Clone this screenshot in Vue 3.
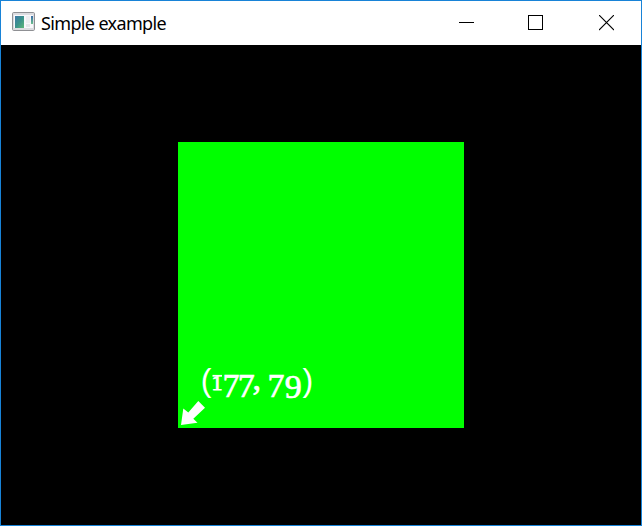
<script setup>
const title = 'Simple example'
</script>

<template>
  <div class="window">
    <header class="titlebar">
      <svg class="app-icon" width="24" height="20" viewBox="0 0 24 20">
        <defs>
          <linearGradient id="pane" x1="0" y1="0" x2="1" y2="1">
            <stop offset="0" stop-color="#3e78a8" />
            <stop offset="0.5" stop-color="#3b928c" />
            <stop offset="1" stop-color="#5fb878" />
          </linearGradient>
          <linearGradient id="strip" x1="0" y1="0" x2="0" y2="1">
            <stop offset="0" stop-color="#3a6ca8" />
            <stop offset="1" stop-color="#6cc08c" />
          </linearGradient>
        </defs>
        <rect x="0.5" y="0.5" width="22" height="18" rx="1.2" fill="#dcdce0" stroke="#8f9094" />
        <rect x="2" y="3" width="19" height="13" fill="#f8f8fb" />
        <rect x="3" y="4" width="9" height="12" fill="url(#pane)" />
        <rect x="14" y="4" width="4" height="7" fill="#eeeef1" />
        <rect x="14" y="12" width="4" height="3" fill="#e5e6e9" />
        <rect x="19" y="4" width="2" height="8" fill="url(#strip)" />
      </svg>
      <h1 class="title">{{ title }}</h1>
      <div class="controls">
        <svg width="15" height="16" viewBox="0 0 15 16" shape-rendering="crispEdges">
          <path d="M0 7.5H15" stroke="#000" />
        </svg>
        <svg class="maximize" width="15" height="16" viewBox="0 0 15 16" shape-rendering="crispEdges">
          <rect x="0.5" y="0.5" width="14" height="14" fill="none" stroke="#000" />
        </svg>
        <svg width="15" height="16" viewBox="0 0 15 16">
          <path d="M0 0L15 15M15 0L0 15" stroke="#000" stroke-width="1.1" />
        </svg>
      </div>
    </header>
    <main class="canvas">
      <svg class="square" width="286" height="286" viewBox="0 0 286 286">
        <text class="coords" x="22.8 33.6 44.5 59.8 74.5 82 89.5 106.7 124.6" y="249 248 255 255 248 248 255 255.5 249"><tspan class="paren">(</tspan><tspan class="one">1</tspan>77, 79<tspan class="paren">)</tspan></text>
        <path class="serif" d="M34.5 233.8H44" />
        <path class="arrow" d="M3 283L5.3 266.5L10.3 270.6L20.3 259L27 265.7L15.3 276.7L19.5 280.8Z" />
      </svg>
    </main>
  </div>
</template>

<style>
body {
  margin: 0;
}
</style>

<style scoped>
.window {
  box-sizing: border-box;
  width: 642px;
  height: 526px;
  display: flex;
  flex-direction: column;
  border: 1px solid #1883d7;
  background: #000;
}

.titlebar {
  height: 44px;
  flex: none;
  box-sizing: border-box;
  display: flex;
  align-items: center;
  padding: 0 27px 0 11px;
  background: #fff;
}

.app-icon {
  flex: none;
  margin-bottom: 2px;
}

.title {
  margin: 0 0 1px 5px;
  font: 400 18px/24px "Noto Sans", "Open Sans", sans-serif;
  letter-spacing: -0.64px;
  color: #000;
  white-space: nowrap;
}

.controls {
  margin-left: auto;
  display: flex;
  gap: 55px;
}

.maximize {
  margin: 0 1px 0 -1px;
}

.canvas {
  flex: 1;
  padding: 97px 0 0 177px;
}

.square {
  display: block;
  background: #0f0;
}

.coords {
  font: 34px "Liberation Serif", serif;
  fill: #fff;
  stroke: #fff;
  stroke-width: 0.7px;
}

.paren {
  font: 32px "Liberation Sans", sans-serif;
  stroke: none;
}

.one {
  font-size: 22px;
  stroke-width: 0.8px;
}

.serif {
  stroke: #fff;
  stroke-width: 1.8px;
}

.arrow {
  fill: #fff;
}
</style>
